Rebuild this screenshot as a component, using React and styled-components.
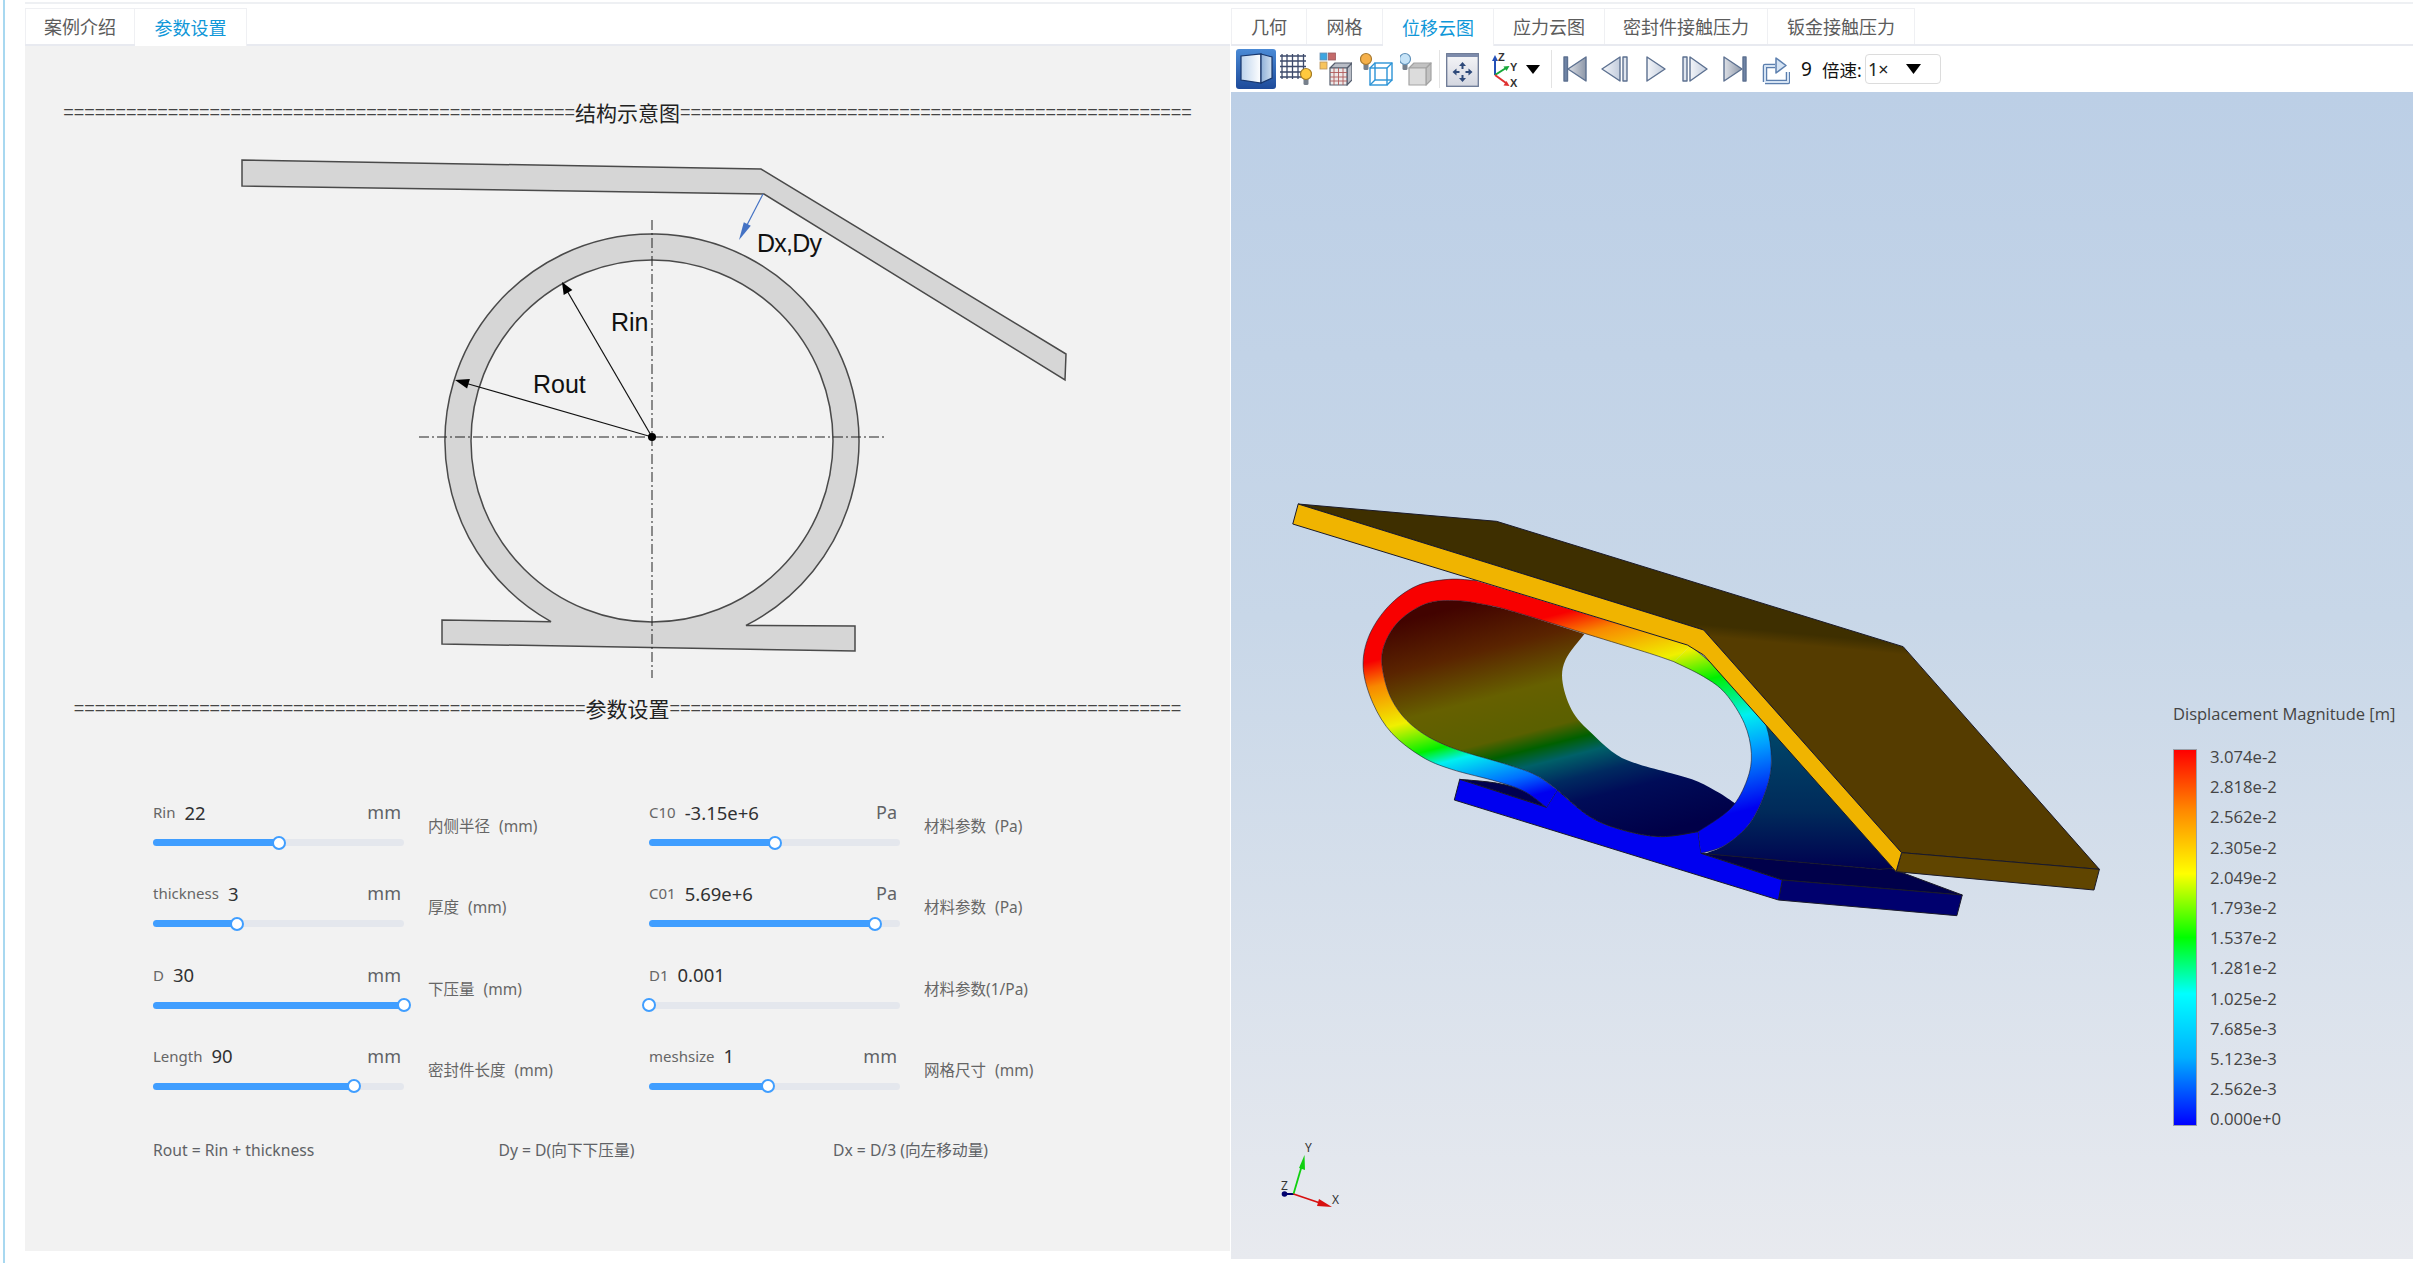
import React from 'react'
import styled, { createGlobalStyle } from 'styled-components'

const GlobalStyle = createGlobalStyle`
    * {
        box-sizing: border-box;
    }
    html, body {
        margin: 0;
        padding: 0;
        background: #fff;
        overflow: hidden;
    }
    body {
        font-family: "Noto Sans", "Noto Sans CJK SC", sans-serif;
    }
`

const Page = styled.div`
    width: 2413px;
    height: 1263px;
    margin-left: 3px;
    border-left: 2px solid #a8d8f0;
    padding-left: 20px;
    overflow: hidden;
`

const Frame = styled.div`
    display: flex;
    margin-top: 2px;
    padding-top: 4px;
    border-top: 2px solid #eef0f3;
    width: 2388px;
`

const LeftPane = styled.div`
    width: 1205px;
    flex: none;
`

const RightPane = styled.div`
    width: 1182px;
    margin-left: 1px;
    flex: none;
`

const TabBar = styled.div`
    display: flex;
    height: 38px;
    border-bottom: 2px solid #e8eaf0;
`

const Tab = styled.div`
    width: ${p => p.$w}px;
    height: ${p => (p.$active ? 38 : 36)}px;
    display: flex;
    align-items: center;
    justify-content: center;
    padding-bottom: 1px;
    background: #fff;
    border: 1px solid #eff0f3;
    border-bottom: none;
    border-left-width: ${p => (p.$first ? 1 : 0)}px;
    font-size: 18px;
    color: ${p => (p.$active ? '#0f97d8' : '#5c5c5c')};
`

const Panel = styled.div`
    height: 1205px;
    background: #f2f2f2;
    padding-top: 54px;
`

const Rule = styled.div`
    height: 24px;
    display: flex;
    align-items: center;
    justify-content: center;
    font-family: "Liberation Sans", sans-serif;
    font-size: 18px;
    letter-spacing: -0.07px;
    color: #444;
    white-space: nowrap;
`

const RuleTitle = styled.span`
    font-family: "Noto Sans CJK SC", sans-serif;
    font-size: 21px;
    letter-spacing: 0;
    color: #222;
`

const Diagram = styled.svg`
    display: block;
    width: 1205px;
    height: 566px;
    margin-top: 6px;
`

const DiagramLabel = styled.text`
    font-family: "Liberation Sans", sans-serif;
    font-size: 25px;
    fill: #111;
`

const SliderGrid = styled.div`
    display: grid;
    grid-template-columns: 251px 245px 251px 1fr;
    grid-auto-rows: 81.33px;
    margin-top: 80px;
    padding-left: 128px;
`

const SliderCell = styled.div`
    display: flex;
    flex-direction: column;
`

const SliderHead = styled.div`
    display: flex;
    align-items: center;
    height: 24px;
    padding-right: 3px;
`

const SliderName = styled.span`
    font-size: 15px;
    color: #666;
`

const SliderValue = styled.span`
    margin-left: 9px;
    font-size: 18.5px;
    color: #303133;
`

const SliderUnit = styled.span`
    margin-left: auto;
    font-size: 18px;
    color: #606266;
`

const Track = styled.div`
    position: relative;
    height: 7px;
    margin-top: 15px;
    border-radius: 4px;
    background: #e4e7ed;
`

const TrackFill = styled.div`
    height: 100%;
    border-radius: 4px;
    background: #409eff;
`

const Thumb = styled.div`
    position: absolute;
    top: -3.5px;
    width: 14px;
    height: 14px;
    margin-left: -7px;
    border-radius: 50%;
    border: 2px solid #409eff;
    background: #fff;
`

const SliderNote = styled.div`
    padding: 17px 0 0 24px;
    font-size: 15.5px;
    line-height: 18px;
    word-spacing: 5px;
    color: #666;
    white-space: nowrap;
`

const Formulas = styled.div`
    display: grid;
    grid-template-columns: 345.5px 334.5px 1fr;
    height: 20px;
    margin-top: 15px;
    padding-left: 128px;
    font-size: 15.7px;
    line-height: 20px;
    color: #606266;
`

const Toolbar = styled.div`
    display: flex;
    align-items: center;
    height: 46px;
    padding-left: 5px;
    background: #fff;
`

const Tool = styled.svg`
    display: block;
    flex: none;
    width: ${p => p.$w}px;
    height: 40px;
    margin-right: ${p => p.$gap || 0}px;
`

const Divider = styled.div`
    flex: none;
    width: 1px;
    height: 38px;
    margin-left: ${p => p.$before || 0}px;
    margin-right: ${p => p.$gap}px;
    background: #e3e3e3;
`

const ToolText = styled.span`
    flex: none;
    width: ${p => p.$w}px;
    font-size: ${p => p.$size}px;
    color: #111;
`

const SpeedSelect = styled.div`
    display: flex;
    align-items: center;
    width: 76px;
    height: 30px;
    padding-left: 2px;
    border: 1px solid #dcdcdc;
    border-radius: 4px;
    font-size: 18px;
    color: #222;
`

const SpeedCaret = styled.svg`
    width: 15px;
    height: 10px;
    margin-left: 17px;
`

const Viewer = styled.div`
    position: relative;
    height: 1167px;
    background: linear-gradient(180deg, #bccfe6 0%, #c8d7e8 45%, #e8eaef 100%);
    overflow: hidden;
`

const Model = styled.svg`
    position: absolute;
    left: 39px;
    top: 388px;
    width: 850px;
    height: 460px;
    & * {
        vector-effect: non-scaling-stroke;
    }
`

const Triad = styled.svg`
    position: absolute;
    left: 29px;
    top: 1028px;
    width: 120px;
    height: 100px;
`

const TriadLabel = styled.text`
    font-family: "Noto Sans", sans-serif;
    font-size: 12px;
    fill: #333;
`

const Legend = styled.div`
    position: absolute;
    left: 942px;
    top: 609px;
    color: #444;
`

const LegendTitle = styled.div`
    height: 25px;
    font-family: "Open Sans", sans-serif;
    font-size: 16.5px;
    line-height: 25px;
    white-space: nowrap;
`

const LegendBody = styled.div`
    display: flex;
    margin-top: 23px;
`

const ColorBar = styled.div`
    width: 24px;
    height: 377px;
    border: 1px solid #9a9fa8;
    background: linear-gradient(180deg, #f00 0%, #ff8800 16%, #ff0 33%, #0f0 50%, #0ff 65%, #00b0ff 82%, #00f 100%);
`

const LegendLabels = styled.div`
    margin: -7px 0 0 13px;
    font-family: "Open Sans", sans-serif;
    font-size: 16.7px;
    line-height: 30.2px;
`

// Catmull-Rom through the points, so the contours read off the reference stay smooth
const curve = pts =>
    pts.slice(0, -1).map((p, i) => {
        const a = pts[i - 1] || p
        const b = pts[i + 1]
        const c = pts[i + 2] || b
        const c1 = [p[0] + (b[0] - a[0]) / 6, p[1] + (b[1] - a[1]) / 6]
        const c2 = [b[0] - (c[0] - p[0]) / 6, b[1] - (c[1] - p[1]) / 6]
        return `C${c1} ${c2} ${b}`
    }).join(' ')

const outerLeft = [[380, 302], [330, 298], [270, 318], [218, 380], [182, 470], [172, 565], [190, 670], [225, 760], [280, 830], [335, 868], [420, 905], [470, 935], [510, 982]]
const innerLeft = [[530, 930], [490, 885], [440, 855], [330, 800], [265, 740], [225, 660], [207, 560], [212, 490], [240, 420], [290, 370], [345, 362], [400, 375], [450, 395], [600, 470], [700, 520], [745, 545]]
const outerRight = [[775, 497], [800, 530], [850, 600], [885, 660], [915, 735], [925, 840], [915, 930], [885, 1030], [840, 1095], [795, 1120]]
const innerRight = [[790, 1055], [850, 985], [880, 900], [888, 820], [875, 730], [840, 640], [800, 590], [745, 545]]
const innerBottom = [[530, 930], [590, 1010], [650, 1050], [720, 1070], [790, 1055]]
const farEdge = [[862, 975], [830, 940], [790, 905], [740, 880], [680, 853], [640, 825], [600, 770], [560, 700], [540, 610], [545, 540], [580, 462]]
const innerInterior = [[450, 395], [400, 375], [345, 362], [290, 370], [240, 420], [212, 490], [207, 560], [225, 660], [265, 740], [330, 800], [440, 855], [490, 885], [530, 930], [590, 1010], [650, 1050], [720, 1070], [790, 1055], [862, 975]]
const backOuter = [[800, 1122], [840, 1095], [885, 1030], [915, 930], [925, 840], [915, 735]]

const sliders = [
    { name: 'Rin', value: '22', unit: 'mm', pct: 50, note: '内侧半径 (mm)' },
    { name: 'C10', value: '-3.15e+6', unit: 'Pa', pct: 50, note: '材料参数 (Pa)' },
    { name: 'thickness', value: '3', unit: 'mm', pct: 33.6, note: '厚度 (mm)' },
    { name: 'C01', value: '5.69e+6', unit: 'Pa', pct: 90, note: '材料参数 (Pa)' },
    { name: 'D', value: '30', unit: 'mm', pct: 100, note: '下压量 (mm)' },
    { name: 'D1', value: '0.001', unit: '', pct: 0, note: '材料参数(1/Pa)' },
    { name: 'Length', value: '90', unit: 'mm', pct: 80, note: '密封件长度 (mm)' },
    { name: 'meshsize', value: '1', unit: 'mm', pct: 47.5, note: '网格尺寸 (mm)' },
]

const legendValues = ['3.074e-2', '2.818e-2', '2.562e-2', '2.305e-2', '2.049e-2', '1.793e-2', '1.537e-2', '1.281e-2', '1.025e-2', '7.685e-3', '5.123e-3', '2.562e-3', '0.000e+0']

const Bulb = ({ x, y, fill, stroke }) => (
    <g>
        <rect x={x - 2.5} y={y + 4} width="5" height="7" rx="1.5" fill="#77808c" />
        <circle cx={x} cy={y} r="5.5" fill={fill} stroke={stroke} strokeWidth="1.2" />
    </g>
)

const Cube = ({ x, y, s, d, fill, side, stroke, sw = 1.2 }) => (
    <g stroke={stroke} strokeWidth={sw} strokeLinejoin="round">
        <path d={`M${x + s},${y} l${d},${-d} v${s} l${-d},${d} Z`} fill={side} />
        <path d={`M${x},${y} l${d},${-d} h${s} l${-d},${d} Z`} fill={side} />
        <rect x={x} y={y} width={s} height={s} fill={fill} />
    </g>
)

const GridIcon = () => (
    <Tool $w={32} $gap={7} viewBox="0 0 32 40">
        <path d="M2,5v25M7,5v25M12.500,5v25M18,5v25M23.500,5v25M0,7h26M0,12h26M0,17.500h26M0,23h26M0,28h26" stroke="#3d4a6b" strokeWidth="1.3" fill="none" />
        <Bulb x={26} y={25} fill="#ffc93d" stroke="#a57c24" />
    </Tool>
)

const MaterialIcon = () => (
    <Tool $w={33} $gap={8} viewBox="0 0 33 40">
        <rect x="1" y="4" width="7" height="7" fill="#3ea5e0" stroke="#6d8fb0" strokeWidth=".8" />
        <rect x="9.500" y="4" width="7" height="7" fill="#c46a6a" stroke="#9c5a60" strokeWidth=".8" />
        <rect x="1" y="13" width="7" height="7" fill="#f7c45e" stroke="#b8925a" strokeWidth=".8" />
        <Cube x={11} y={19} s={17} d={5} fill="#ece8e8" side="#b9bdc6" stroke="#545d6d" />
        <path d="M15,19v17M19.500,19v17M24,19v17M11,23.500h17M11,28h17M11,32h17" stroke="#b05a5a" strokeWidth=".9" />
    </Tool>
)

const WireIcon = () => (
    <Tool $w={33} $gap={7} viewBox="0 0 33 40">
        <Bulb x={6} y={10} fill="#f5b04a" stroke="#a87a30" />
        <g fill="none" stroke="#2b93d6" strokeWidth="1.4">
            <rect x="10" y="19" width="17" height="17" />
            <rect x="15" y="14" width="17" height="17" />
            <path d="M10,19l5,-5M27,19l5,-5M27,36l5,-5M10,36l5,-5" />
        </g>
    </Tool>
)

const SolidIcon = () => (
    <Tool $w={32} viewBox="0 0 32 40">
        <Bulb x={5} y={10} fill="#c6e3f7" stroke="#5f90b8" />
        <Cube x={9} y={19} s={17} d={5} fill="#dcdcdc" side="#c2c2c2" stroke="#a3a3a3" />
    </Tool>
)

const FitIcon = () => (
    <Tool $w={33} $gap={13} viewBox="0 0 33 40">
        <defs>
            <linearGradient id="fitBg" x1="0" y1="0" x2="0" y2="1">
                <stop offset="0" stopColor="#f6f6f8" />
                <stop offset="1" stopColor="#d3d6e0" />
            </linearGradient>
        </defs>
        <rect x=".7" y="4.700" width="31.600" height="32.600" fill="url(#fitBg)" stroke="#6b7894" strokeWidth="1.3" />
        <rect x="1" y="5" width="31" height="3" fill="#7d8bab" />
        <path d="M16.500,13l-3.500,4h2.500v3h2v-3h2.500ZM16.500,33l-3.500,-4h2.500v-3h2v3h2.500ZM6.500,23l4,-3.500v2.500h3v2h-3v2.500ZM26.500,23l-4,-3.500v2.500h-3v2h3v2.500Z" fill="#2f4a7a" />
    </Tool>
)

const AxesIcon = () => (
    <Tool $w={26} $gap={8} viewBox="0 0 26 40">
        <path d="M3,26V10" stroke="#2450b8" strokeWidth="2" />
        <path d="M3,6l-3,6h6Z" fill="#2450b8" />
        <path d="M3,26L14,19" stroke="#16a83a" strokeWidth="2" />
        <path d="M17.500,17l-6,.5l3,4.500Z" fill="#16a83a" />
        <path d="M3,26L14,34" stroke="#e03030" strokeWidth="2" />
        <path d="M17.500,37l-6,-.5l3,-4.500Z" fill="#e03030" />
        <text x="6" y="12" fontSize="11" fontWeight="700" fontFamily="Liberation Sans" fill="#333">Z</text>
        <text x="18" y="22" fontSize="11" fontWeight="700" fontFamily="Liberation Sans" fill="#333">Y</text>
        <text x="18" y="38" fontSize="11" fontWeight="700" fontFamily="Liberation Sans" fill="#333">X</text>
    </Tool>
)

const Caret = () => (
    <Tool $w={14} $gap={11} viewBox="0 0 14 40">
        <path d="M0,16H14L7,25Z" fill="#000" />
    </Tool>
)

const playStroke = { stroke: '#5c7090', strokeWidth: 1.4, strokeLinejoin: 'round' }

const PlayDefs = () => (
    <svg width="0" height="0" style={{ position: 'absolute' }}>
        <defs>
            <linearGradient id="playLight" x1="0" y1="0" x2="1" y2="0">
                <stop offset="0" stopColor="#f3f5f9" />
                <stop offset="1" stopColor="#c3cddd" />
            </linearGradient>
            <linearGradient id="playDark" x1="0" y1="0" x2="1" y2="0">
                <stop offset="0" stopColor="#dde0e6" />
                <stop offset="1" stopColor="#8d97a8" />
            </linearGradient>
        </defs>
    </svg>
)

const FirstIcon = () => (
    <Tool $w={24} $gap={14} viewBox="0 0 24 40">
        <rect x="1" y="8" width="3.500" height="24" fill="#6f84a6" {...playStroke} />
        <path d="M5,20L23,8V32Z" fill="url(#playDark)" {...playStroke} />
    </Tool>
)

const PrevIcon = () => (
    <Tool $w={27} $gap={18} viewBox="0 0 27 40">
        <path d="M1,20L19,8V32Z" fill="url(#playLight)" {...playStroke} />
        <rect x="22" y="8" width="4" height="24" fill="#dfe5ee" {...playStroke} />
    </Tool>
)

const PlayIcon = () => (
    <Tool $w={20} $gap={16} viewBox="0 0 20 40">
        <path d="M1,8L19,20L1,32Z" fill="url(#playLight)" {...playStroke} />
    </Tool>
)

const NextIcon = () => (
    <Tool $w={26} $gap={15} viewBox="0 0 26 40">
        <rect x="1" y="8" width="4" height="24" fill="#dfe5ee" {...playStroke} />
        <path d="M8,8L25,20L8,32Z" fill="url(#playLight)" {...playStroke} />
    </Tool>
)

const LastIcon = () => (
    <Tool $w={24} $gap={15} viewBox="0 0 24 40">
        <path d="M1,8L19,20L1,32Z" fill="url(#playDark)" {...playStroke} />
        <rect x="20" y="8" width="3" height="24" fill="#6f84a6" {...playStroke} />
    </Tool>
)

const ShareIcon = () => (
    <Tool $w={28} $gap={11} viewBox="0 0 28 40">
        <path d="M3,33V17H13M3,33H26V23" fill="none" stroke="#5c7fae" strokeWidth="4.500" strokeLinejoin="round" />
        <path d="M3,33V17H13M3,33H26V23" fill="none" stroke="#d5e3f3" strokeWidth="2" strokeLinejoin="round" />
        <path d="M14,9L24,16.500L14,24Z" fill="#d5e3f3" stroke="#5c7fae" strokeWidth="1.500" strokeLinejoin="round" />
    </Tool>
)

const ActiveViewIcon = () => (
    <Tool $w={40} $gap={4} viewBox="0 0 40 40">
        <defs>
            <linearGradient id="activeBg" x1="0" y1="0" x2="0" y2="1">
                <stop offset="0" stopColor="#4a8ad6" />
                <stop offset="1" stopColor="#1d4a9a" />
            </linearGradient>
            <linearGradient id="activeFace" x1="0" y1="0" x2="1" y2="0">
                <stop offset="0" stopColor="#bcd3ec" />
                <stop offset="1" stopColor="#ffffff" />
            </linearGradient>
            <linearGradient id="activeSide" x1="0" y1="0" x2="1" y2="0">
                <stop offset="0" stopColor="#8fb0d8" />
                <stop offset="1" stopColor="#cfdff0" />
            </linearGradient>
        </defs>
        <rect width="40" height="40" rx="3" fill="url(#activeBg)" />
        <path d="M5,7L25,5V34L5,31Z" fill="url(#activeFace)" stroke="#16356b" strokeWidth="1.2" />
        <path d="M25,5L36,8V29L25,34Z" fill="url(#activeSide)" stroke="#16356b" strokeWidth="1.2" />
    </Tool>
)

const StructureDiagram = () => (
    <Diagram viewBox="25 130 1205 566">
        <path d="M242,160L761,169L1066,354L1065,380L764,194L242,186Z" fill="#d6d6d6" stroke="#4a4a4a" strokeWidth="1.500" />
        <path
            fillRule="evenodd"
            d="M442,620L551,621.700A207,207 0 1 1 746,625.400L855,626L855,651L442,644Z M471,441a181,181 0 1 0 362,0a181,181 0 1 0 -362,0Z"
            fill="#d6d6d6"
            stroke="#4a4a4a"
            strokeWidth="1.500"
        />
        <g stroke="#222" strokeWidth="1" strokeDasharray="10 3 2 3">
            <path d="M419,437H885" />
            <path d="M652,220V678" />
        </g>
        <g stroke="#111" strokeWidth="1.200">
            <path d="M652,437L566,289" />
            <path d="M652,437L465,383" />
        </g>
        <path d="M562,282L572.400,290L563.700,295Z" fill="#000" />
        <path d="M455,380L469.900,379L467.100,388.600Z" fill="#000" />
        <circle cx="652" cy="437" r="4" fill="#000" />
        <path d="M763,194L747,225" stroke="#4472c4" strokeWidth="1.200" />
        <path d="M739,240L750.800,225.800L743.800,222.200Z" fill="#4472c4" />
        <DiagramLabel x="611" y="331">Rin</DiagramLabel>
        <DiagramLabel x="533" y="393">Rout</DiagramLabel>
        <DiagramLabel x="757" y="252" textLength="65">Dx,Dy</DiagramLabel>
    </Diagram>
)

const DisplacementModel = () => (
    <Model viewBox="0 0 1568 1380" preserveAspectRatio="none">
        <defs>
            <linearGradient id="bandLeft" gradientUnits="userSpaceOnUse" x1="163" y1="398" x2="437" y2="1064">
                <stop offset=".2" stopColor="#f80000" />
                <stop offset=".3" stopColor="#f88800" />
                <stop offset=".47" stopColor="#f0f000" />
                <stop offset=".6" stopColor="#00f000" />
                <stop offset=".66" stopColor="#00f0f0" />
                <stop offset=".79" stopColor="#0070ff" />
                <stop offset=".875" stopColor="#0000f0" />
            </linearGradient>
            <linearGradient id="bandRight" gradientUnits="userSpaceOnUse" x1="163" y1="398" x2="475" y2="1156">
                <stop offset=".29" stopColor="#f89000" />
                <stop offset=".41" stopColor="#f0f000" />
                <stop offset=".525" stopColor="#00f000" />
                <stop offset=".677" stopColor="#00f0f0" />
                <stop offset=".79" stopColor="#00a0ff" />
                <stop offset="1" stopColor="#0000f0" />
            </linearGradient>
            <linearGradient id="interior" gradientUnits="userSpaceOnUse" x1="163" y1="398" x2="475" y2="1156">
                <stop offset=".066" stopColor="#420300" />
                <stop offset=".235" stopColor="#5a2400" />
                <stop offset=".4" stopColor="#666000" />
                <stop offset=".55" stopColor="#5a6000" />
                <stop offset=".61" stopColor="#006000" />
                <stop offset=".666" stopColor="#006068" />
                <stop offset=".745" stopColor="#002a60" />
                <stop offset=".825" stopColor="#000c58" />
                <stop offset="1" stopColor="#000048" />
            </linearGradient>
            <linearGradient id="backSurface" gradientUnits="userSpaceOnUse" x1="0" y1="735" x2="0" y2="1168">
                <stop offset="0" stopColor="#00486a" />
                <stop offset=".6" stopColor="#002a5a" />
                <stop offset="1" stopColor="#000050" />
            </linearGradient>
            <linearGradient id="plateTop" gradientUnits="userSpaceOnUse" x1="985" y1="462" x2="980" y2="495">
                <stop offset="0" stopColor="#3e2f00" />
                <stop offset="1" stopColor="#553c00" />
            </linearGradient>
        </defs>

        <g stroke="#1a1a2a" strokeWidth="1">
            <path d={`M580,462L450,395 ${curve(innerInterior)} ${curve(farEdge)}Z`} fill="url(#interior)" stroke="none" />
            <path d={`M800,1122 ${curve(backOuter)} L930,735L1160,1165L1125,1168Z`} fill="url(#backSurface)" stroke="none" />
            <path d="M795,1120L1125,1168L1145,1165L1277,1245L945,1200Z" fill="#00004a" />
            <path d="M945,1200L1277,1245L1267,1307L938,1260Z" fill="#00006e" />
            <path d={`M350,898 ${curve([[350, 898], [420, 910], [470, 935], [510, 982]])}Z`} fill="#000050" />
            <path d={`M350,898L510,982L530,930 ${curve(innerBottom)} L795,1120L945,1200L938,1260L340,960Z`} fill="#0000f0" />
            <path d={`M745,545L775,497L380,302 ${curve(outerLeft)} L530,930 ${curve(innerLeft)}Z`} fill="url(#bandLeft)" stroke="none" />
            <path d={`M775,497 ${curve(outerRight)} L790,1055 ${curve(innerRight)}Z`} fill="url(#bandRight)" stroke="none" />
            <g fill="none" strokeWidth=".6">
                <path d={`M380,302 ${curve(outerLeft)}`} />
                <path d={`M530,930 ${curve(innerLeft)}`} />
                <path d={`M775,497 ${curve(outerRight)}`} />
                <path d={`M790,1055 ${curve(innerRight)}`} />
            </g>
            <path d="M52,72L418,124L1168,500L1530,1168L1165,1118L800,450Z" fill="url(#plateTop)" />
            <path d="M1165,1118L1530,1168L1520,1230L1155,1175Z" fill="#604500" />
            <path d="M52,72L800,450L1165,1118L1155,1175L800,525L770,495L42,132Z" fill="#f0b400" />
        </g>
    </Model>
)

const OrientationTriad = () => (
    <Triad viewBox="1260 1120 120 100">
        <path d="M1284,1194H1294" stroke="#00006e" strokeWidth="2" />
        <circle cx="1284.500" cy="1194" r="2.800" fill="#00006e" />
        <path d="M1293.500,1194L1302,1165" stroke="#10d010" strokeWidth="1.800" />
        <path d="M1304.500,1155L1299,1168L1305,1170Z" fill="#10d010" />
        <path d="M1293.500,1194L1320,1203" stroke="#d81010" strokeWidth="1.800" />
        <path d="M1332,1207L1319,1199L1317,1206Z" fill="#d81010" />
        <TriadLabel x="1305" y="1152">Y</TriadLabel>
        <TriadLabel x="1332" y="1204">X</TriadLabel>
        <TriadLabel x="1281" y="1190">Z</TriadLabel>
    </Triad>
)

const leftTabs = [
    { label: '案例介绍', w: 110 },
    { label: '参数设置', w: 112, active: true },
]

const rightTabs = [
    { label: '几何', w: 76 },
    { label: '网格', w: 76 },
    { label: '位移云图', w: 111, active: true },
    { label: '应力云图', w: 111 },
    { label: '密封件接触压力', w: 163 },
    { label: '钣金接触压力', w: 147 },
]

const renderTabs = tabs => tabs.map((tab, i) => (
    <Tab key={tab.label} $w={tab.w} $active={tab.active} $first={i === 0}>{tab.label}</Tab>
))

const App = () => (
    <Page>
        <GlobalStyle />
        <PlayDefs />
        <Frame>
            <LeftPane>
                <TabBar>{renderTabs(leftTabs)}</TabBar>
                <Panel>
                    <Rule>{'='.repeat(49)}<RuleTitle>结构示意图</RuleTitle>{'='.repeat(49)}</Rule>
                    <StructureDiagram />
                    <Rule>{'='.repeat(49)}<RuleTitle>参数设置</RuleTitle>{'='.repeat(49)}</Rule>
                    <SliderGrid>
                        {sliders.map(s => (
                            <React.Fragment key={s.name}>
                                <SliderCell>
                                    <SliderHead>
                                        <SliderName>{s.name}</SliderName>
                                        <SliderValue>{s.value}</SliderValue>
                                        <SliderUnit>{s.unit}</SliderUnit>
                                    </SliderHead>
                                    <Track>
                                        <TrackFill style={{ width: `${s.pct}%` }} />
                                        <Thumb style={{ left: `${s.pct}%` }} />
                                    </Track>
                                </SliderCell>
                                <SliderNote>{s.note}</SliderNote>
                            </React.Fragment>
                        ))}
                    </SliderGrid>
                    <Formulas>
                        <span>Rout = Rin + thickness</span>
                        <span>Dy = D(向下下压量)</span>
                        <span>Dx = D/3 (向左移动量)</span>
                    </Formulas>
                </Panel>
            </LeftPane>
            <RightPane>
                <TabBar>{renderTabs(rightTabs)}</TabBar>
                <Toolbar>
                    <ActiveViewIcon />
                    <GridIcon />
                    <MaterialIcon />
                    <WireIcon />
                    <SolidIcon />
                    <Divider $before={7} $gap={6} />
                    <FitIcon />
                    <AxesIcon />
                    <Caret />
                    <Divider $gap={11} />
                    <FirstIcon />
                    <PrevIcon />
                    <PlayIcon />
                    <NextIcon />
                    <LastIcon />
                    <ShareIcon />
                    <ToolText $w={21} $size={19}>9</ToolText>
                    <ToolText $w={43} $size={17.5}>倍速:</ToolText>
                    <SpeedSelect>
                        1×
                        <SpeedCaret viewBox="0 0 15 10"><path d="M0,0H15L7.500,10Z" fill="#000" /></SpeedCaret>
                    </SpeedSelect>
                </Toolbar>
                <Viewer>
                    <DisplacementModel />
                    <OrientationTriad />
                    <Legend>
                        <LegendTitle>Displacement Magnitude [m]</LegendTitle>
                        <LegendBody>
                            <ColorBar />
                            <LegendLabels>
                                {legendValues.map((v, i) => <div key={i}>{v}</div>)}
                            </LegendLabels>
                        </LegendBody>
                    </Legend>
                </Viewer>
            </RightPane>
        </Frame>
    </Page>
)

export default App
